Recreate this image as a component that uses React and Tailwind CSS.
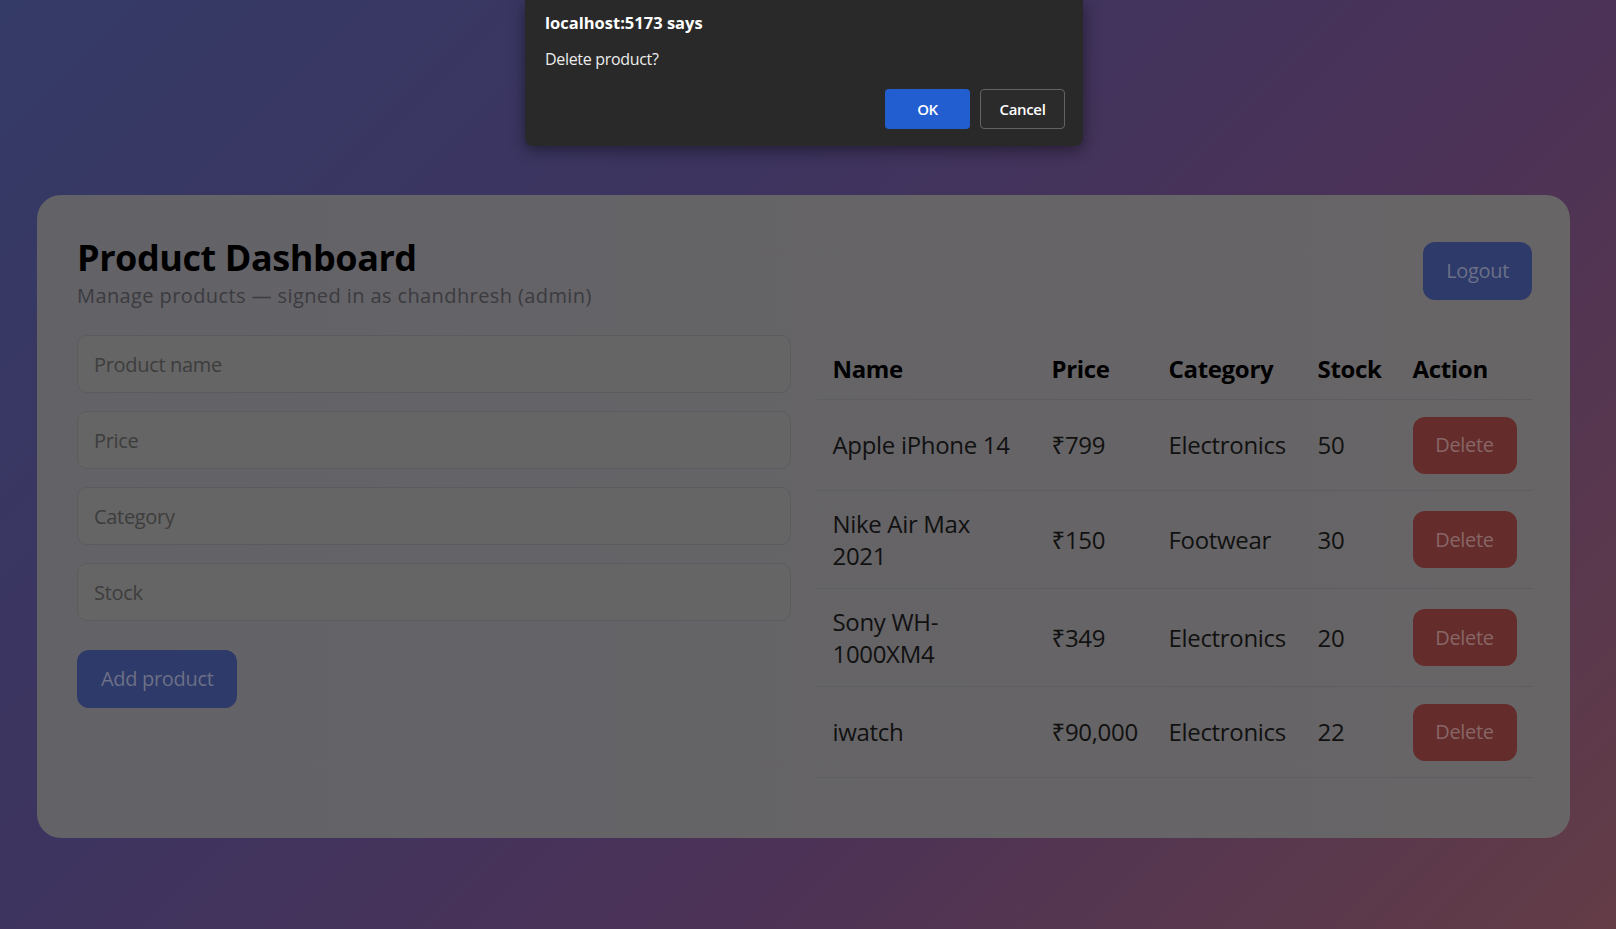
import { useState } from "react";

const PRODUCTS = [
    { id: 1, name: "Apple iPhone 14", price: "₹799", category: "Electronics", stock: 50 },
    { id: 2, name: "Nike Air Max 2021", price: "₹150", category: "Footwear", stock: 30 },
    { id: 3, name: "Sony WH-1000XM4", price: "₹349", category: "Electronics", stock: 20 },
    { id: 4, name: "iwatch", price: "₹90,000", category: "Electronics", stock: 22 },
];

const FIELDS = ["Product name", "Price", "Category", "Stock"];

function ConfirmDialog() {
    return (
        <div className="absolute top-0 left-[525px] w-[558px] h-[146px] rounded-b-lg bg-[#292929] shadow-[0_4px_16px_rgba(0,0,0,0.45)] px-5 pt-[11px] text-white">
            <p className="text-[16.5px] font-bold leading-6 tracking-normal">localhost:5173 says</p>
            <p className="mt-3 text-base leading-6 text-[#ececec] tracking-[-0.02em]">Delete product?</p>
            <div className="flex justify-end gap-[10px] mt-[18px]">
                <button className="w-[85px] h-[40px] rounded bg-[#235ed1] text-[15px] font-semibold">OK</button>
                <button className="w-[85px] h-[40px] rounded border border-[#636363] bg-[#2b2b2b] text-[15px] font-semibold mr-[-2px]">
                    Cancel
                </button>
            </div>
        </div>
    );
}

export default function App() {
    const [products] = useState(PRODUCTS);

    return (
        <div className="relative w-full min-h-screen h-[929px] overflow-hidden font-['Open_Sans','Noto_Sans',sans-serif] tracking-[-0.02em] bg-[linear-gradient(135deg,#343a66_0%,#3d345f_36%,#4c3257_64%,#633c46_100%)]">
            <div className="pt-[195px] pl-[37px]">
                <div className="w-[1533px] rounded-3xl bg-[linear-gradient(90deg,#636267,#676566)] pl-10 pr-[38px] pt-[43px] pb-[60px]">
                    {/* header */}
                    <div className="flex items-start justify-between">
                        <div>
                            <h1 className="text-4xl font-bold text-black tracking-[-0.012em]">Product Dashboard</h1>
                            <p className="mt-1 text-xl text-[#3b3b40] tracking-[0.02em]">
                                Manage products — signed in as chandhresh (admin)
                            </p>
                        </div>
                        <button className="mt-1 h-[58px] px-[23px] rounded-xl bg-[#2e3a69] text-xl text-[#6c7087]">Logout</button>
                    </div>

                    <div className="grid grid-cols-2 gap-[26px] mt-[25px] mr-[2px]">
                        {/* form */}
                        <div className="flex flex-col gap-[18px]">
                            {FIELDS.map((f) => (
                                <input
                                    key={f}
                                    placeholder={f}
                                    className="h-[58px] w-full rounded-[10px] border border-[#5c5c5f] bg-[#656565] px-4 text-xl text-[#3d3d3d] placeholder:text-[#3d3d3d] outline-none"
                                />
                            ))}
                            <button className="self-start mt-[11px] h-[58px] px-6 rounded-xl bg-[#2e3a69] text-xl text-[#6c7087]">
                                Add product
                            </button>
                        </div>

                        {/* table */}
                        <table className="w-[716px] table-fixed border-collapse self-start mt-1 text-2xl text-[#111]">
                            <thead>
                                <tr className="border-b border-[#5e5d62] text-left">
                                    <th className="w-[219px] px-4 py-[14px] leading-8 font-bold text-black">Name</th>
                                    <th className="w-[117px] px-4 py-[14px] leading-8 font-bold text-black">Price</th>
                                    <th className="w-[149px] px-4 py-[14px] leading-8 font-bold text-black">Category</th>
                                    <th className="w-[95px] px-4 py-[14px] leading-8 font-bold text-black">Stock</th>
                                    <th className="w-[136px] px-4 py-[14px] leading-8 font-bold text-black">Action</th>
                                </tr>
                            </thead>
                            <tbody>
                                {products.map((p) => (
                                    <tr key={p.id} className="border-b border-[#5e5d62]">
                                        <td className="px-4 py-[16.5px] leading-8">{p.name}</td>
                                        <td className="px-4 py-[16.5px] leading-8 whitespace-nowrap">{p.price}</td>
                                        <td className="px-4 py-[16.5px] leading-8">{p.category}</td>
                                        <td className="px-4 py-[16.5px] leading-8">{p.stock}</td>
                                        <td className="px-4 py-[16.5px]">
                                            <button className="block w-[104px] h-[57px] rounded-xl bg-[#652c2c] text-xl text-[#876666]">
                                                Delete
                                            </button>
                                        </td>
                                    </tr>
                                ))}
                            </tbody>
                        </table>
                    </div>
                </div>
            </div>

            <ConfirmDialog />
        </div>
    );
}
